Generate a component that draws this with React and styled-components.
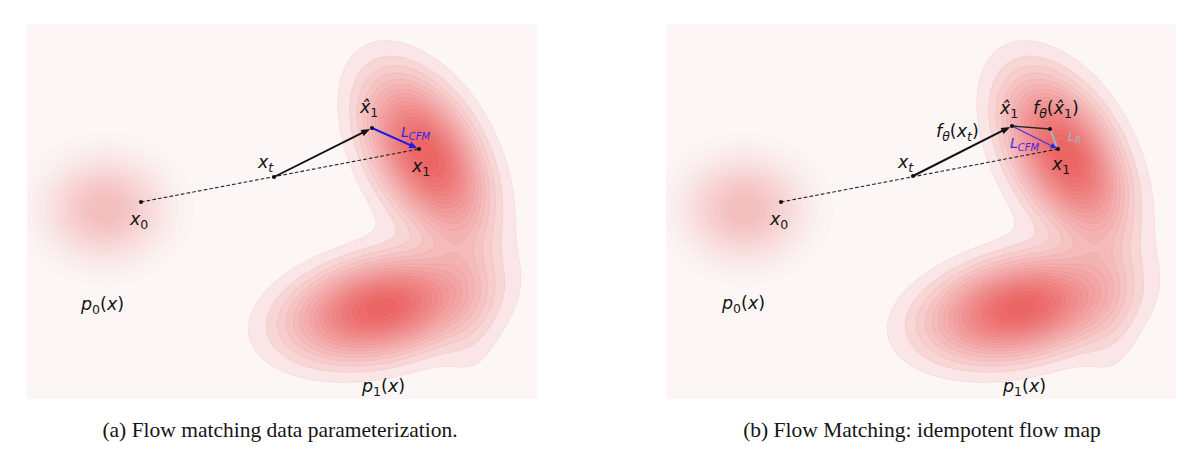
import React, { useMemo } from 'react';
import styled, { createGlobalStyle } from 'styled-components';

const W = 510;
const H = 375;

const GlobalStyle = createGlobalStyle`
  html, body { margin: 0; padding: 0; background: #ffffff; }
  #root { width: 1200px; height: 462px; }
`;

const Page = styled.div`
  display: flex;
  gap: 129px;
  padding: 24px 0 0 27px;
  width: 1200px;
  height: 462px;
  box-sizing: border-box;
`;

const Figure = styled.figure`
  margin: 0;
  width: ${W}px;
  display: flex;
  flex-direction: column;
  align-items: center;
`;

const Plot = styled.svg`
  display: block;
  width: ${W}px;
  height: ${H}px;
  overflow: hidden;
`;

const Caption = styled.figcaption`
  margin-top: 19px;
  font-family: "Liberation Serif", "Times New Roman", serif;
  font-size: 21.5px;
  line-height: 24px;
  color: #151515;
  white-space: nowrap;
  margin-left: ${(p) => p.$shift || 0}px;
`;

const Label = styled.text`
  font-family: "DejaVu Sans", "Liberation Sans", sans-serif;
  font-size: ${(p) => p.$size || 17.5}px;
  fill: ${(p) => p.$color || '#141414'};
`;

const It = styled.tspan`
  font-style: italic;
`;

const Sub = styled.tspan`
  font-size: ${(p) => p.$size || 12.5}px;
  font-style: ${(p) => (p.$it ? 'italic' : 'normal')};
`;

const Dot = styled.circle`
  fill: #111;
`;

const Dashed = styled.line`
  stroke: #222;
  stroke-width: 1.1;
  stroke-dasharray: 3.6 2.2;
`;

const Shaft = styled.line`
  stroke: ${(p) => p.$color};
  stroke-width: ${(p) => p.$w};
  stroke-linecap: butt;
`;

const Head = styled.polygon`
  fill: ${(p) => p.$color};
`;

const Band = styled.path`
  fill-rule: evenodd;
  stroke-width: 0.6;
`;

/* ---------- density field + marching squares ---------- */

function gauss(x, y, g) {
  const dx = x - g.cx;
  const dy = y - g.cy;
  const t = (g.th * Math.PI) / 180;
  const c = Math.cos(t);
  const s = Math.sin(t);
  const u = dx * c + dy * s;
  const v = -dx * s + dy * c;
  return g.w * Math.exp(-0.5 * ((u / g.sa) ** 2 + (v / g.sb) ** 2));
}

function buildGrid(comps, x0, y0, x1, y1, cell) {
  const nx = Math.ceil((x1 - x0) / cell) + 1;
  const ny = Math.ceil((y1 - y0) / cell) + 1;
  const f = new Float64Array(nx * ny);
  let max = 0;
  for (let j = 0; j < ny; j++) {
    for (let i = 0; i < nx; i++) {
      let v = 0;
      if (i > 0 && j > 0 && i < nx - 1 && j < ny - 1) {
        const x = x0 + i * cell;
        const y = y0 + j * cell;
        for (const g of comps) v += gauss(x, y, g);
      }
      f[j * nx + i] = v;
      if (v > max) max = v;
    }
  }
  return { f, nx, ny, x0, y0, cell, max };
}

const SEG = {
  1: [[3, 2]],
  2: [[2, 1]],
  3: [[3, 1]],
  4: [[0, 1]],
  6: [[0, 2]],
  7: [[0, 3]],
  8: [[0, 3]],
  9: [[0, 2]],
  11: [[0, 1]],
  12: [[3, 1]],
  13: [[2, 1]],
  14: [[3, 2]],
};

function isoPath(grid, L) {
  const { f, nx, ny, x0, y0, cell } = grid;
  const segs = [];
  const pts = new Map();
  const edgeKey = (i, j, e) => {
    if (e === 0) return 2 * (j * nx + i);
    if (e === 2) return 2 * ((j + 1) * nx + i);
    if (e === 3) return 2 * (j * nx + i) + 1;
    return 2 * (j * nx + i + 1) + 1;
  };
  const edgePt = (k) => {
    if (pts.has(k)) return;
    const vert = k & 1;
    const idx = k >> 1;
    const i = idx % nx;
    const j = (idx - i) / nx;
    const a = f[idx];
    const b = vert ? f[idx + nx] : f[idx + 1];
    const t = (L - a) / (b - a);
    pts.set(
      k,
      vert ? [x0 + i * cell, y0 + (j + t) * cell] : [x0 + (i + t) * cell, y0 + j * cell]
    );
  };
  for (let j = 0; j < ny - 1; j++) {
    for (let i = 0; i < nx - 1; i++) {
      const a = f[j * nx + i];
      const b = f[j * nx + i + 1];
      const c = f[(j + 1) * nx + i + 1];
      const d = f[(j + 1) * nx + i];
      const code = (a > L ? 8 : 0) | (b > L ? 4 : 0) | (c > L ? 2 : 0) | (d > L ? 1 : 0);
      if (code === 0 || code === 15) continue;
      let list;
      if (code === 5 || code === 10) {
        const center = (a + b + c + d) / 4 > L;
        if (code === 5) list = center ? [[0, 3], [2, 1]] : [[0, 1], [3, 2]];
        else list = center ? [[0, 1], [3, 2]] : [[0, 3], [2, 1]];
      } else list = SEG[code];
      for (const [e1, e2] of list) {
        const k1 = edgeKey(i, j, e1);
        const k2 = edgeKey(i, j, e2);
        edgePt(k1);
        edgePt(k2);
        segs.push(k1, k2);
      }
    }
  }
  const n = segs.length / 2;
  const adj = new Map();
  for (let s = 0; s < n; s++) {
    for (const k of [segs[2 * s], segs[2 * s + 1]]) {
      const l = adj.get(k);
      if (l) l.push(s);
      else adj.set(k, [s]);
    }
  }
  const used = new Uint8Array(n);
  let d = '';
  for (let s = 0; s < n; s++) {
    if (used[s]) continue;
    used[s] = 1;
    const start = segs[2 * s];
    let cur = segs[2 * s + 1];
    const p0 = pts.get(start);
    d += `M${p0[0].toFixed(1)} ${p0[1].toFixed(1)}`;
    let guard = 0;
    while (cur !== start && guard++ < 200000) {
      const p = pts.get(cur);
      d += `L${p[0].toFixed(1)} ${p[1].toFixed(1)}`;
      const l = adj.get(cur);
      let next = -1;
      for (const t of l) {
        if (!used[t]) {
          next = t;
          break;
        }
      }
      if (next < 0) break;
      used[next] = 1;
      cur = segs[2 * next] === cur ? segs[2 * next + 1] : segs[2 * next];
    }
    d += 'Z';
  }
  return d;
}

const lerp = (a, b, t) => a.map((v, i) => Math.round(v + (b[i] - v) * t));
const rgb = (c) => `rgb(${c[0]},${c[1]},${c[2]})`;

const P1_COMPONENTS = [
  { cx: 398, cy: 130, sa: 48, sb: 27, th: 60, w: 1.0 },
  { cx: 400, cy: 142, sa: 78, sb: 46, th: 65, w: 0.09 },
  { cx: 354, cy: 284, sa: 52, sb: 27, th: -12, w: 1.0 },
  { cx: 350, cy: 287, sa: 76, sb: 40, th: -12, w: 0.09 },
  { cx: 436, cy: 238, sa: 78, sb: 21, th: 85, w: 0.09 },
];

const P0_COMPONENTS = [{ cx: 78, cy: 185, sa: 34, sb: 29, th: 0, w: 1 }];

function makeBands(comps, box, cell, n, cLow, cHigh, gamma, stroke) {
  const grid = buildGrid(comps, box[0], box[1], box[2], box[3], cell);
  const bands = [];
  for (let k = 1; k < n; k++) {
    const L = (grid.max * k) / n;
    const t = Math.pow((k - 1) / (n - 2), gamma);
    bands.push({ d: isoPath(grid, L), fill: rgb(lerp(cLow, cHigh, t)), stroke });
  }
  return bands;
}

function arrow(p, q, len, half, shrink) {
  const dx = q[0] - p[0];
  const dy = q[1] - p[1];
  const l = Math.hypot(dx, dy);
  const ux = dx / l;
  const uy = dy / l;
  const tip = [q[0] - ux * shrink, q[1] - uy * shrink];
  const base = [tip[0] - ux * len, tip[1] - uy * len];
  const poly = [
    tip,
    [base[0] - uy * half, base[1] + ux * half],
    [base[0] + uy * half, base[1] - ux * half],
  ]
    .map((v) => `${v[0].toFixed(2)},${v[1].toFixed(2)}`)
    .join(' ');
  return { base, poly };
}

function Arrow({ from, to, color, width, len = 8, half = 3.2, shrink = 2 }) {
  const a = arrow(from, to, len, half, shrink);
  return (
    <g>
      <Shaft
        x1={from[0]}
        y1={from[1]}
        x2={a.base[0] + (to[0] - from[0]) * 0.01}
        y2={a.base[1] + (to[1] - from[1]) * 0.01}
        $color={color}
        $w={width}
      />
      <Head points={a.poly} $color={color} />
    </g>
  );
}

function Density({ p0, p1 }) {
  return (
    <g>
      <rect x="0" y="0" width={W} height={H} fill="rgb(253,246,246)" />
      {p0.map((b, i) => (
        <Band key={`a${i}`} d={b.d} fill={b.fill} stroke={b.stroke} />
      ))}
      {p1.map((b, i) => (
        <Band key={`b${i}`} d={b.d} fill={b.fill} stroke={b.stroke} />
      ))}
    </g>
  );
}

const HAT = 'x\u0302';

function PanelA({ bands }) {
  const x0 = [114, 178];
  const xt = [247, 153];
  const xh = [345, 104];
  const x1 = [392, 125];
  return (
    <Plot viewBox={`0 0 ${W} ${H}`}>
      <Density {...bands} />
      <Dashed x1={x0[0]} y1={x0[1]} x2={x1[0]} y2={x1[1]} />
      <Arrow from={xt} to={xh} color="#111" width={1.9} len={9} half={3.4} shrink={2} />
      <Arrow from={xh} to={x1} color="rgb(28,28,228)" width={2.1} len={8} half={3.4} shrink={2} />
      <Dot cx={x0[0]} cy={x0[1]} r={2.1} />
      <Dot cx={xt[0]} cy={xt[1]} r={2.1} />
      <Dot cx={xh[0]} cy={xh[1]} r={2.1} />
      <Dot cx={x1[0]} cy={x1[1]} r={2.1} />

      <Label x={103} y={201}>
        <It>x</It>
        <Sub dy={4}>0</Sub>
      </Label>
      <Label x={231} y={144}>
        <It>x</It>
        <Sub dy={4} $it>t</Sub>
      </Label>
      <Label x={333} y={89}>
        <It>{HAT}</It>
        <Sub dy={4}>1</Sub>
      </Label>
      <Label x={385} y={148}>
        <It>x</It>
        <Sub dy={4}>1</Sub>
      </Label>
      <Label x={374} y={113} $size={14} $color="rgb(52,36,226)">
        <It>L</It>
        <Sub dy={3} $it $size={10}>CFM</Sub>
      </Label>
      <Label x={54} y={286}>
        <It>p</It>
        <Sub dy={4}>0</Sub>
        <tspan dy={-4}>(</tspan>
        <It>x</It>
        <tspan>)</tspan>
      </Label>
      <Label x={335} y={368}>
        <It>p</It>
        <Sub dy={3.5}>1</Sub>
        <tspan dy={-3.5}>(</tspan>
        <It>x</It>
        <tspan>)</tspan>
      </Label>
    </Plot>
  );
}

function PanelB({ bands }) {
  const x0 = [115, 178];
  const xt = [247, 152];
  const xh = [346, 102];
  const fx = [384, 105];
  const x1 = [392, 125];
  return (
    <Plot viewBox={`0 0 ${W} ${H}`}>
      <Density {...bands} />
      <Dashed x1={x0[0]} y1={x0[1]} x2={x1[0]} y2={x1[1]} />
      <Arrow from={xt} to={xh} color="#111" width={2} len={9} half={3.4} shrink={2} />
      <Shaft x1={xh[0]} y1={xh[1]} x2={fx[0]} y2={fx[1]} $color="#222" $w={1.3} />
      <Shaft
        x1={fx[0]}
        y1={fx[1]}
        x2={x1[0] - 1.5}
        y2={x1[1] - 3}
        $color="rgb(168,176,182)"
        $w={2.2}
      />
      <Arrow from={xh} to={x1} color="rgb(86,62,214)" width={1.3} len={6} half={2.6} shrink={1.5} />
      <Head points={arrow(xh, x1, 6, 2.6, 1.5).poly} $color="rgb(30,40,235)" />
      <Dot cx={x0[0]} cy={x0[1]} r={2.1} />
      <Dot cx={xt[0]} cy={xt[1]} r={2.1} />
      <Dot cx={xh[0]} cy={xh[1]} r={2.1} />
      <Dot cx={fx[0]} cy={fx[1]} r={2} />
      <Dot cx={x1[0]} cy={x1[1]} r={2.1} />

      <Label x={104} y={201}>
        <It>x</It>
        <Sub dy={4}>0</Sub>
      </Label>
      <Label x={232} y={144}>
        <It>x</It>
        <Sub dy={4} $it>t</Sub>
      </Label>
      <Label x={270} y={113}>
        <It>f</It>
        <Sub dy={4} $it>θ</Sub>
        <tspan dy={-4}>(</tspan>
        <It>x</It>
        <Sub dy={4} $it>t</Sub>
        <tspan dy={-4}>)</tspan>
      </Label>
      <Label x={334} y={90}>
        <It>{HAT}</It>
        <Sub dy={4}>1</Sub>
      </Label>
      <Label x={367} y={90}>
        <It>f</It>
        <Sub dy={4} $it>θ</Sub>
        <tspan dy={-4}>(</tspan>
        <It>{HAT}</It>
        <Sub dy={4}>1</Sub>
        <tspan dy={-4}>)</tspan>
      </Label>
      <Label x={344} y={124} $size={14} $color="rgb(70,36,230)">
        <It>L</It>
        <Sub dy={3} $it $size={10}>CFM</Sub>
      </Label>
      <Label x={402} y={117} $size={12.5} $color="rgb(160,186,196)">
        <It>L</It>
        <Sub dy={2} $it $size={8.5}>R</Sub>
      </Label>
      <Label x={386} y={146}>
        <It>x</It>
        <Sub dy={4}>1</Sub>
      </Label>
      <Label x={56} y={285}>
        <It>p</It>
        <Sub dy={4}>0</Sub>
        <tspan dy={-4}>(</tspan>
        <It>x</It>
        <tspan>)</tspan>
      </Label>
      <Label x={337} y={368}>
        <It>p</It>
        <Sub dy={3.5}>1</Sub>
        <tspan dy={-3.5}>(</tspan>
        <It>x</It>
        <tspan>)</tspan>
      </Label>
    </Plot>
  );
}

export default function App() {
  const bands = useMemo(() => {
    const p1 = makeBands(
      P1_COMPONENTS,
      [150, -60, 620, 460],
      3,
      20,
      [250, 230, 230],
      [236, 102, 102],
      0.72,
      'rgba(190,60,60,0.14)'
    );
    const p0 = makeBands(
      P0_COMPONENTS,
      [-150, -40, 320, 420],
      3,
      30,
      [252, 244, 244],
      [244, 190, 190],
      0.85,
      'rgba(210,110,110,0.06)'
    );
    return { p0, p1 };
  }, []);

  return (
    <>
      <GlobalStyle />
      <Page>
        <Figure>
          <PanelA bands={bands} />
          <Caption $shift={-4}>(a) Flow matching data parameterization.</Caption>
        </Figure>
        <Figure>
          <PanelB bands={bands} />
          <Caption $shift={2}>(b) Flow Matching: idempotent flow map</Caption>
        </Figure>
      </Page>
    </>
  );
}
